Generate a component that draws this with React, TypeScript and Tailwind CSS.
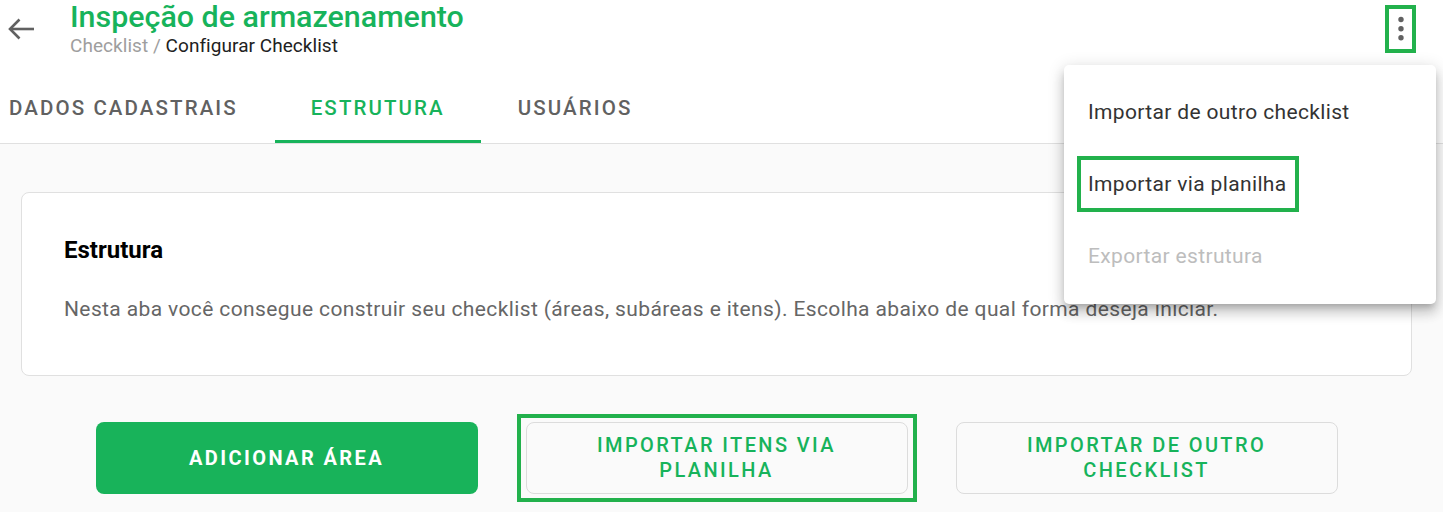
import React from "react";

const GREEN = "text-[#17b35b]";

function DotsIcon() {
  return (
    <svg width="12" height="30" viewBox="0 0 12 30" fill="#616161">
      <circle cx="6" cy="5.5" r="2.7" />
      <circle cx="6" cy="14.7" r="2.7" />
      <circle cx="6" cy="23.7" r="2.7" />
    </svg>
  );
}

function BackIcon() {
  return (
    <svg width="28" height="24" viewBox="0 0 28 24" fill="none" stroke="#616161" strokeWidth="2.6" strokeLinecap="butt" strokeLinejoin="miter">
      <path d="M3 12H27" />
      <path d="M12.5 2.5L3 12l9.5 9.5" />
    </svg>
  );
}

export default function App() {
  return (
    <div
      className="relative w-[1443px] h-[512px] overflow-hidden bg-[#fafafa]"
      style={{ fontFamily: "Roboto, 'Noto Sans', sans-serif" }}
    >
      {/* Header */}
      <div className="bg-white border-b border-[#e0e0e0]">
        <div className="flex items-start justify-between pr-[27px]">
          <div className="flex items-start">
            <div className="w-[70px] pl-[7px] pt-[17px]">
              <BackIcon />
            </div>
            <div className="flex flex-col">
              <h1 className={`text-[30.4px] leading-[34px] font-medium ${GREEN}`}>
                Inspeção de armazenamento
              </h1>
              <div className="text-[19px] leading-[24px] tracking-[0.05px]">
                <span className="text-[#9e9e9e]">Checklist / </span>
                <span className="text-[#212121]">Configurar Checklist</span>
              </div>
            </div>
          </div>
          <div className="mt-[5px] w-[31px] h-[48px] border-[4px] border-[#22b14c] flex items-center justify-center">
            <DotsIcon />
          </div>
        </div>
        {/* Tabs */}
        <div className="flex mt-[15px] h-[70px]">
          <div className="pl-[9px] pr-[37px] flex items-center text-[20.5px] font-medium tracking-[2.1px] text-[#616161]">
            DADOS CADASTRAIS
          </div>
          <div className="relative w-[206px] flex items-center justify-center text-[20.5px] font-medium tracking-[2.1px] text-[#17b35b]">
            ESTRUTURA
            <div className="absolute left-0 right-0 bottom-0 h-[3px] bg-[#17b35b]" />
          </div>
          <div className="pl-[37px] flex items-center text-[20.5px] font-medium tracking-[2.1px] text-[#616161]">
            USUÁRIOS
          </div>
        </div>
      </div>

      {/* Main */}
      <div className="pl-[21px] pr-[31px] pt-[48px]">
        <div className="h-[184px] rounded-[8px] border border-[#e0e0e0] bg-white pl-[42px] pt-[41px]">
          <h2 className="text-[24px] leading-[32px] font-bold text-black">Estrutura</h2>
          <p className="mt-[29px] text-[21px] leading-[28px] tracking-[0.38px] text-[#666666]">
            Nesta aba você consegue construir seu checklist (áreas, subáreas e itens). Escolha abaixo de qual forma deseja iniciar.
          </p>
        </div>

        <div className="mt-[46px] flex justify-center gap-[48px]">
          <button className="w-[382px] h-[72px] rounded-[8px] bg-[#18b35a] text-white text-[20px] font-bold tracking-[2.4px] leading-[25px]">
            ADICIONAR ÁREA
          </button>
          <div className="relative">
            <button className={`w-[382px] h-[72px] rounded-[8px] border border-[#dcdcdc] bg-[#fafafa] ${GREEN} text-[20px] font-medium tracking-[2.4px] leading-[25px] px-[50px]`}>
              IMPORTAR ITENS VIA PLANILHA
            </button>
            <div className="absolute -left-[9px] -right-[9px] -top-[8px] -bottom-[8px] border-[4px] border-[#22b14c] pointer-events-none" />
          </div>
          <button className={`w-[382px] h-[72px] rounded-[8px] border border-[#dcdcdc] bg-[#fafafa] ${GREEN} text-[20px] font-medium tracking-[2.4px] leading-[25px] px-[50px]`}>
            IMPORTAR DE OUTRO CHECKLIST
          </button>
        </div>
      </div>

      {/* Menu overlay */}
      <div className="absolute left-[1064px] top-[65px] w-[372px] h-[239px] bg-white rounded-[5px] shadow-[0_5px_6px_-3px_rgba(0,0,0,0.2),0_9px_12px_1px_rgba(0,0,0,0.14),0_3px_16px_2px_rgba(0,0,0,0.12)] pt-[12px]">
        <div className="h-[72px] flex items-center pl-[24px] text-[21px] tracking-[0.35px] text-[#333333]">
          Importar de outro checklist
        </div>
        <div className="h-[72px] flex items-center pl-[24px] text-[21px] tracking-[0.35px] text-[#333333]">
          <span className="relative">
            Importar via planilha
            <span className="absolute -left-[11px] -right-[12px] -top-[13px] -bottom-[11px] border-[4px] border-[#22b14c]" />
          </span>
        </div>
        <div className="h-[72px] flex items-center pl-[24px] text-[21px] tracking-[0.35px] text-[#bdbdbd]">
          Exportar estrutura
        </div>
      </div>
    </div>
  );
}
